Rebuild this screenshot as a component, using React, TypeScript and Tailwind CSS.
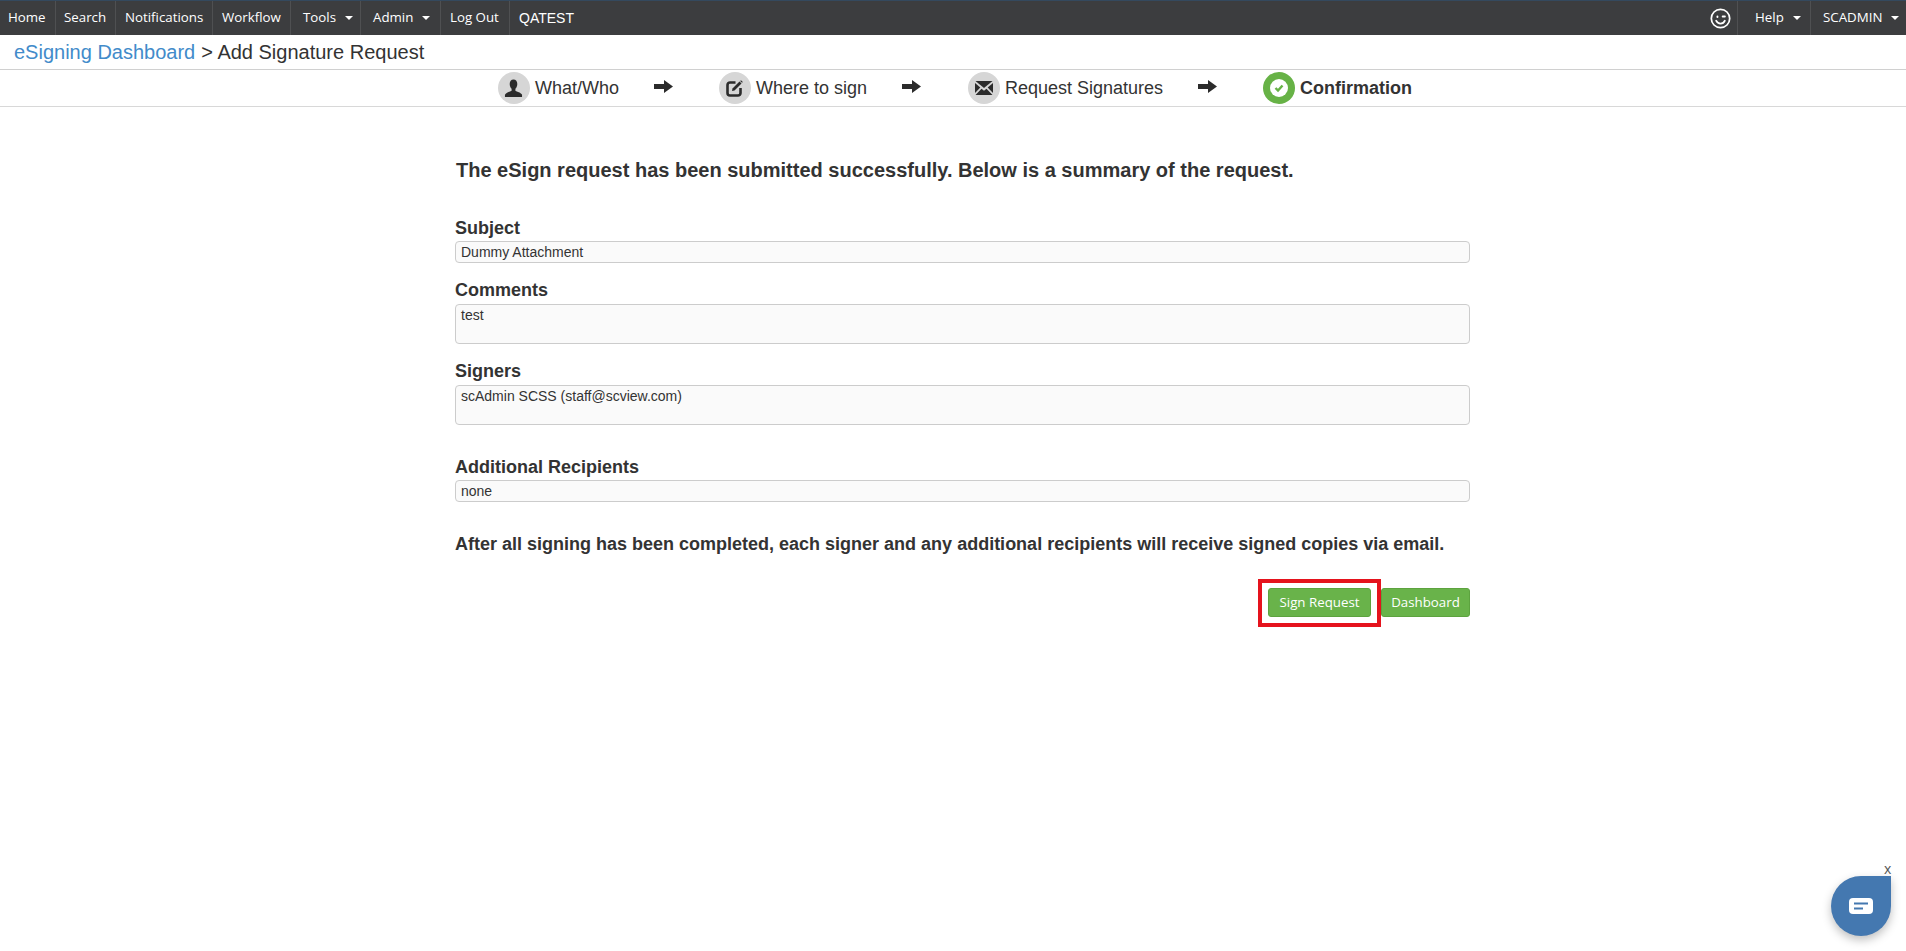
import type { ReactNode } from "react";

function Caret() {
  return (
    <span className="ml-[9px] inline-block align-middle border-x-4 border-t-[4px] border-x-transparent border-t-white" />
  );
}

function NavItem({ label, caret, className }: { label: string; caret?: boolean; className: string }) {
  return (
    <div className={`flex h-full items-center border-r border-[#4f5052] ${className}`}>
      {label}
      {caret && <Caret />}
    </div>
  );
}

function Arrow({ className }: { className: string }) {
  return (
    <svg viewBox="0 0 19 13" className={`mb-[3px] h-[13px] w-[19px] shrink-0 fill-[#2b2b2b] ${className}`}>
      <path d="M0 4H10V0L19 6.5 10 13V9H0Z" />
    </svg>
  );
}

function StepIcon({ children, active }: { children: ReactNode; active?: boolean }) {
  return (
    <div
      className={`flex h-8 w-8 shrink-0 items-center justify-center rounded-full ${
        active ? "bg-[#67b246]" : "bg-[#d6d6d6]"
      }`}
    >
      {children}
    </div>
  );
}

function Field({ label, value, tall, className }: { label: string; value: string; tall?: boolean; className: string }) {
  return (
    <div className={className}>
      <div className="text-[18px] font-bold leading-[20px] text-[#333]">{label}</div>
      <div
        className={`rounded-[4px] border border-[#ccc] bg-[#fafafa] px-[5px] text-[14px] leading-[20px] text-[#333] ${
          tall ? "mt-[4px] h-10" : "mt-[3px] h-[22px]"
        }`}
      >
        {value}
      </div>
    </div>
  );
}

export default function App() {
  return (
    <div className="relative h-[951px] overflow-hidden bg-white font-['Liberation_Sans',sans-serif] text-[#333]">
      <nav className="flex h-[35px] items-center justify-between border-t border-t-[#34495e] bg-[#3c3d3f] font-['Open_Sans',sans-serif] text-[13.3px] text-white">
        <div className="flex h-full items-center">
          <NavItem label="Home" className="w-[56px] pl-[8px]" />
          <NavItem label="Search" className="w-[60px] pl-[8px]" />
          <NavItem label="Notifications" className="w-[97px] pl-[9px]" />
          <NavItem label="Workflow" className="w-[78px] pl-[9px]" />
          <NavItem label="Tools" caret className="w-[70px] pl-[12px]" />
          <NavItem label="Admin" caret className="w-[80px] pl-[12px]" />
          <NavItem label="Log Out" className="w-[69px] pl-[9px]" />
          <div className="pl-[9px] font-['Liberation_Sans',sans-serif] text-[14px]">QATEST</div>
        </div>
        <div className="flex h-full items-center">
          <div className="flex h-full w-[39px] items-center border-r border-[#4f5052] pl-[11px]">
            <svg viewBox="0 0 24 24" className="h-[21px] w-[21px] shrink-0 fill-none stroke-white stroke-2">
              <circle cx="12" cy="12" r="10.5" />
              <path d="M7 14.5c1.2 2.4 3 3.4 5 3.4s4-1 5-3.4" strokeLinecap="round" />
              <path d="M8.5 9.6v.6M14.5 9.8h2.5" strokeLinecap="round" strokeWidth="2.2" />
            </svg>
          </div>
          <NavItem label="Help" caret className="w-[73px] pl-[17px]" />
          <div className="flex h-full w-[95px] items-center pl-[12px]">
            SCADMIN
            <Caret />
          </div>
        </div>
      </nav>

      <div className="flex h-[35px] items-center border-b border-[#d0d0d0] pl-[14px] text-[20px]">
        <span className="text-[#428bca]">eSigning Dashboard</span>
        <span className="ml-[6px] text-[#333]">&gt; Add Signature Request</span>
      </div>

      <div className="flex h-[37px] items-center justify-center border-b border-[#d8d8d8] pl-[4px] text-[18px]">
        <StepIcon>
          <svg viewBox="0 0 20 20" className="h-[19px] w-[19px] fill-[#2b2b2b]">
            <path d="M10 .5c-2.6 0-4 2.1-4 4.7 0 2.1.9 4 2 5v2.1c-1.8 1.1-6 2-7 4.2V19h18v-2.5c-1-2.2-5.2-3.1-7-4.2v-2.1c1.1-1 2-2.9 2-5C14 2.6 12.6.5 10 .5z" />
          </svg>
        </StepIcon>
        <span className="ml-[5px] text-[#333]">What/Who</span>
        <Arrow className="ml-[35px] mr-[46px]" />
        <StepIcon>
          <svg viewBox="0 0 20 20" className="h-[20px] w-[20px]">
            <path d="M10.5 4.5H5A2.5 2.5 0 0 0 2.5 7v8A2.5 2.5 0 0 0 5 17.5h8a2.5 2.5 0 0 0 2.5-2.5V10" className="fill-none stroke-[#2b2b2b] stroke-[2.6]" />
            <path d="M7.5 10.5 14.5 3.5 16.5 5.5 9.5 12.5 7 13z" className="fill-[#2b2b2b]" />
            <path d="M16 2.2 17.8 4 17 4.8 15.2 3z" className="fill-[#2b2b2b]" />
          </svg>
        </StepIcon>
        <span className="ml-[5px] text-[#333]">Where to sign</span>
        <Arrow className="ml-[35px] mr-[47px]" />
        <StepIcon>
          <svg viewBox="0 0 20 20" className="h-[20px] w-[20px] fill-[#2b2b2b]">
            <path d="M1.5 3h17L10 10z" />
            <path d="M1 5v10l5.3-5.4z" />
            <path d="M19 5v10l-5.3-5.4z" />
            <path d="M1.5 17h17l-6-6.2L10 12.8l-2.5-2z" />
          </svg>
        </StepIcon>
        <span className="ml-[5px] text-[#333]">Request Signatures</span>
        <Arrow className="ml-[35px] mr-[46px]" />
        <StepIcon active>
          <div className="flex h-[18px] w-[18px] items-center justify-center rounded-full bg-white">
            <svg viewBox="0 0 12 12" className="h-3 w-3 fill-none stroke-[#67b246] stroke-[2.4]">
              <path d="M2.5 6 5 8.5 9.5 3.5" />
            </svg>
          </div>
        </StepIcon>
        <span className="ml-[5px] font-bold text-[#333]">Confirmation</span>
      </div>

      <main className="ml-[455px] w-[1015px]">
        <h1 className="ml-px mt-[50px] text-[20px] font-bold leading-[26px] text-[#333]">
          The eSign request has been submitted successfully. Below is a summary of the request.
        </h1>
        <Field label="Subject" value="Dummy Attachment" className="mt-[35px]" />
        <Field label="Comments" value="test" tall className="mt-[17px]" />
        <Field label="Signers" value="scAdmin SCSS (staff@scview.com)" tall className="mt-[17px]" />
        <Field label="Additional Recipients" value="none" className="mt-[32px]" />
        <p className="mt-[32px] text-[18px] font-bold leading-[20px] text-[#333]">
          After all signing has been completed, each signer and any additional recipients will receive signed copies via email.
        </p>
        <div className="mt-[34px] flex justify-end gap-[10px] font-['Open_Sans',sans-serif] text-[13.3px] text-white">
          <div className="relative">
            <div className="flex h-[29px] w-[103px] items-center justify-center rounded-[3px] border border-[#5da33f] bg-[#69b34a]">
              Sign Request
            </div>
            <div className="absolute -top-[9px] -left-[10px] -right-[10px] -bottom-[10px] border-[4px] border-[#e5131d]" />
          </div>
          <div className="flex h-[29px] w-[89px] items-center justify-center rounded-[3px] border border-[#5da33f] bg-[#69b34a]">
            Dashboard
          </div>
        </div>
      </main>

      <div className="absolute left-[1884px] top-[858px] font-['Open_Sans',sans-serif] text-[14px] text-[#555]">x</div>
      <div className="absolute left-[1831px] top-[876px] flex h-[60px] w-[60px] items-center justify-center rounded-full rounded-tr-[8px] bg-[#4478b0] shadow-[0_4px_10px_rgba(0,0,0,0.25)]">
        <svg viewBox="0 0 24 16" className="h-4 w-6">
          <rect width="24" height="16" rx="4" fill="#fff" />
          <path d="M5 5.5h14M5 10.5h9" stroke="#4478b0" strokeWidth="2" />
        </svg>
      </div>
    </div>
  );
}
